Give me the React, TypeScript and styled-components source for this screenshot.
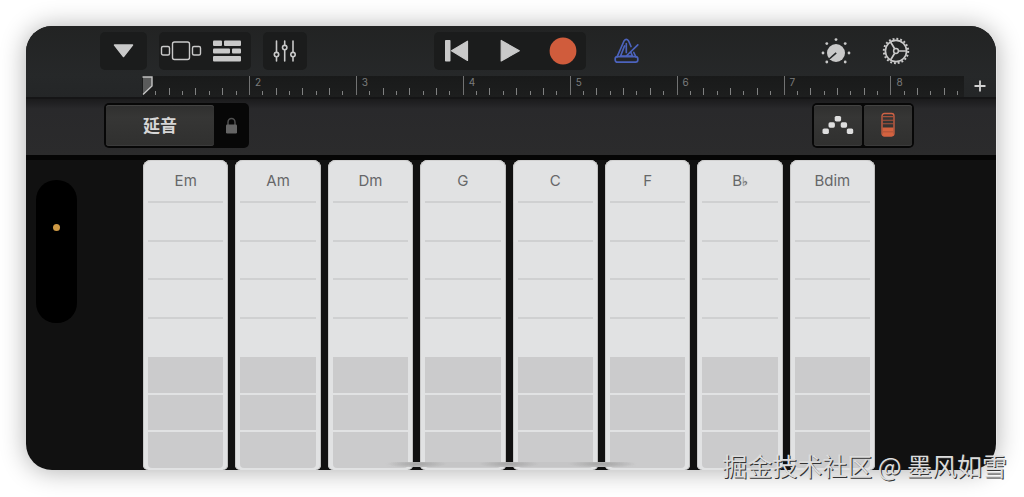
import React, { useState } from 'react';
import styled, { createGlobalStyle, css } from 'styled-components';

const GlobalStyle = createGlobalStyle`
  *, *::before, *::after { box-sizing: border-box; }
  html, body { margin: 0; padding: 0; background: #fff; }
  body { font-family: Inter, "Liberation Sans", "Noto Sans CJK SC", sans-serif; }
  button { margin: 0; padding: 0; border: 0; background: none; color: inherit; font: inherit; cursor: pointer; }
  svg { display: block; }
`;

const Page = styled.div`
  position: relative;
  display: flex;
  min-height: 100vh;
  padding: 26px 28px 27px 26px;
  overflow: hidden;
`;

const Device = styled.main`
  position: relative;
  display: flex;
  flex: 1;
  flex-direction: column;
  min-width: 0;
  overflow: hidden;
  border-radius: 26px;
  background: #111;
`;

const Shade = styled.div`
  display: flex;
  flex: 1;
  min-width: 0;
  border-radius: 26px;
  box-shadow: 1px 0 0 #e4e4e4, 0 1px 26px rgba(0, 0, 0, 0.32);
`;

const Header = styled.header`
  background: linear-gradient(#222323, #262829 70%, #242627);
`;

const Toolbar = styled.div`
  display: grid;
  grid-template-columns: 1fr auto 1fr;
  align-items: center;
  height: 50px;
  padding: 0 77px 0 74px;
`;

const ToolSide = styled.div<{ $end?: boolean }>`
  display: flex;
  gap: ${(p) => (p.$end ? 14 : 12)}px;
  padding-left: ${(p) => (p.$end ? 18 : 0)}px;
`;

const ToolGroup = styled.div`
  display: flex;
  border-radius: 5px;
  background: #1b1c1c;
`;

const ToolButton = styled.button<{ $width?: number; $push?: boolean }>`
  display: flex;
  align-items: center;
  justify-content: center;
  width: ${(p) => p.$width ?? 46}px;
  height: 38px;
  margin-right: ${(p) => (p.$push ? 'auto' : '0')};
`;

const RulerRow = styled.div`
  display: flex;
  height: 21px;
  padding-left: 116px;
`;

const Ruler = styled.div`
  position: relative;
  display: flex;
  flex: 1;
  background: linear-gradient(#191a1a, #1d1e1e);
`;

const Bar = styled.div<{ $units: number }>`
  position: relative;
  display: flex;
  flex: ${(p) => p.$units} 0 0;
`;

const BarNumber = styled.span`
  position: absolute;
  top: 0;
  left: 6px;
  color: #7b7c7c;
  font-size: 10px;
  line-height: 12px;
`;

const Tick = styled.i<{ $units: number; $kind: 'none' | 'major' | 'mid' | 'minor' }>`
  flex: ${(p) => p.$units} 0 0;
  height: ${(p) => ({ none: 0, major: 19, mid: 7, minor: 4 })[p.$kind]}px;
  margin-top: ${(p) => ({ none: 0, major: 0, mid: 12, minor: 15 })[p.$kind]}px;
  border-left: 1px solid ${(p) => (p.$kind === 'major' ? '#717272' : '#808181')};
  ${(p) => p.$kind === 'none' && css`border-color: transparent;`}
`;

const Playhead = styled.svg`
  position: absolute;
  top: 0;
  left: 0;
`;

const AddButton = styled.button`
  display: flex;
  align-items: center;
  justify-content: center;
  width: 32px;
  padding-bottom: 2px;
`;

const Controls = styled.div`
  display: flex;
  align-items: flex-start;
  justify-content: space-between;
  height: 63px;
  padding: 4px 82px 0 78px;
  border-top: 2px solid #151516;
  border-bottom: 5px solid #050505;
  background: linear-gradient(#1b1b1c, #29292b 10px, #2b2b2c);
`;

const Plate = styled.div`
  display: flex;
  gap: 2px;
  height: 45px;
  padding: 2px;
  border-radius: 5px;
  background: #070707;
`;

const PlateButton = styled.button<{ $width: number; $flat?: boolean }>`
  display: flex;
  align-items: center;
  justify-content: center;
  width: ${(p) => p.$width}px;
  border-radius: 3px;
  color: #d6d6d6;
  font-family: "Noto Sans CJK SC", sans-serif;
  font-size: 17px;
  font-weight: 700;
  line-height: 24px;
  ${(p) =>
    !p.$flat &&
    css`
      padding-bottom: 2px;
      background: linear-gradient(#2f2f2f, #363635 30%, #30302f);
      box-shadow: inset 0 1px 0 #434342, inset 0 -1px 0 #3b3b3b;
    `}
`;

const Stage = styled.div`
  display: flex;
  flex: 1;
  padding-right: 121px;
`;

const Side = styled.div`
  flex: 0 0 117px;
  padding: 20px 0 0 10px;
`;

const Island = styled.div`
  width: 41px;
  height: 143px;
  padding: 44px 0 0 17px;
  border-radius: 20px;
  background: #000;
`;

const MicDot = styled.i`
  display: block;
  width: 7px;
  height: 7px;
  border-radius: 50%;
  background: #cf9a45;
`;

const Strips = styled.div`
  display: flex;
  flex: 1;
  gap: 7px;
  min-width: 0;
`;

const Strip = styled.section`
  display: flex;
  flex: 1 1 0;
  flex-direction: column;
  min-width: 0;
  min-height: 310px;
  padding: 0 5px 2px;
  border-radius: 8px 8px 5px 5px;
  background: #e1e2e3;
  box-shadow: inset 1px 0 0 #c9c9c9, inset -1px 0 0 #c0c0c0, inset 0 1px 0 #d2d2d2;
`;

const Chord = styled.button`
  height: 43px;
  border-bottom: 2px solid #cfd0d1;
  color: #666769;
  font-size: 15px;
  line-height: 41px;
  text-align: center;
`;

const Flat = styled.span`
  font-family: "DejaVu Sans", sans-serif;
  font-size: 12px;
  text-shadow: 0 0 1px #666769;
`;

const LightZone = styled.div`
  display: grid;
  flex: 1;
  grid-auto-rows: 1fr;
`;

const LightCell = styled.button`
  border-bottom: 2px solid #cfd0d1;
  &:last-child { border-bottom: 0; }
`;

const BassZone = styled.div`
  display: grid;
  grid-auto-rows: 1fr;
  gap: 2px;
  height: 111px;
`;

const BassCell = styled.button`
  background: #cbcbcc;
  &:last-child { border-radius: 0 0 4px 4px; }
`;

const HomeBar = styled.div`
  position: absolute;
  bottom: 3px;
  left: 37%;
  width: 26%;
  height: 5px;
  border-radius: 3px;
  background:
    radial-gradient(ellipse 30px 4px at 32px 2px, #a4a4a4, transparent),
    radial-gradient(ellipse 30px 4px at 124px 2px, #a4a4a4, transparent),
    radial-gradient(ellipse 34px 4px at 217px 2px, #a4a4a4, transparent),
    linear-gradient(90deg, transparent, #c5c5c6 12%, #c5c5c6 88%, transparent);
`;

const Watermark = styled.p`
  position: absolute;
  right: 17px;
  bottom: 14px;
  margin: 0;
  color: #dcdcdc;
  font-family: "Noto Sans CJK SC", sans-serif;
  font-size: 25px;
  line-height: 36px;
  white-space: nowrap;
  text-shadow: 1px 1px 0 #333;
`;

const ink = '#c9c9c9';

const MenuIcon = () => (
  <svg width="22" height="16" viewBox="0 0 22 16">
    <path d="M1.5 2H19.5L10.5 13.5Z" fill={ink} stroke={ink} strokeWidth="1.5" strokeLinejoin="round" />
  </svg>
);

const BrowserIcon = () => (
  <svg width="42" height="22" viewBox="0 0 42 22" fill="none" stroke={ink} strokeWidth="1.4">
    <rect x="12.5" y="2" width="17" height="17.5" rx="2" />
    <rect x="1.5" y="6.5" width="8" height="8.5" rx="1.5" />
    <rect x="32.5" y="6.5" width="8" height="8.5" rx="1.5" />
  </svg>
);

const TracksIcon = () => (
  <svg width="28" height="22" viewBox="0 0 28 22" fill={ink}>
    <rect x="0" y="0.5" width="9" height="5.5" rx="1" />
    <rect x="11" y="0.5" width="17" height="5.5" rx="1" />
    <rect x="0" y="8.5" width="17" height="5" rx="1" />
    <rect x="19" y="8.5" width="9" height="5" rx="1" />
    <rect x="0" y="16" width="28" height="5.5" rx="1" />
  </svg>
);

const MixerIcon = () => (
  <svg width="24" height="24" viewBox="0 0 24 24" fill="none" stroke={ink} strokeWidth="1.6" strokeLinecap="round">
    <path d="M3.5 2V13.2M3.5 18V22M11.7 2V6.2M11.7 11V22M20 2V13.2M20 18V22" />
    <circle cx="3.5" cy="15.6" r="2.2" />
    <circle cx="11.7" cy="8.6" r="2.2" />
    <circle cx="20" cy="15.6" r="2.2" />
  </svg>
);

const RewindIcon = () => (
  <svg width="24" height="22" viewBox="0 0 24 22" fill={ink}>
    <rect x="0" y="0" width="5.5" height="21.5" rx="0.8" />
    <path d="M22.5 1.2V20.5L6.5 10.8Z" stroke={ink} strokeWidth="1.2" strokeLinejoin="round" />
  </svg>
);

const PlayIcon = () => (
  <svg width="20" height="24" viewBox="0 0 20 24">
    <path d="M1.2 1.5V22L19.3 11.8Z" fill={ink} stroke={ink} strokeWidth="1.2" strokeLinejoin="round" />
  </svg>
);

const RecordIcon = () => (
  <svg width="28" height="28" viewBox="0 0 28 28">
    <circle cx="14" cy="14" r="13.4" fill="#d05c3c" />
  </svg>
);

const MetronomeIcon = () => (
  <svg width="26" height="26" viewBox="0 0 26 26" fill="none" stroke="#4c63bd" strokeWidth="1.7" strokeLinecap="round" strokeLinejoin="round">
    <path d="M3 19L10 3Q12.3 -0.2 14.6 3L17 8.5M19.8 14.5L22 19" />
    <rect x="1.2" y="18.6" width="22.6" height="5.6" rx="2.2" />
    <path d="M6.5 18.2H18.5L17 14.5M6.5 18.2L10.5 8M12.3 5.5V14.5M12.3 18L23.8 6.8" />
  </svg>
);

const KnobIcon = () => (
  <svg width="30" height="28" viewBox="0 0 30 28" fill={ink}>
    <circle cx="15" cy="16" r="9" />
    <path d="M15.2 15.8L8.2 22" stroke="#252728" strokeWidth="1.6" />
    {[
      [15, 2.6], [5.8, 6.6], [24.2, 6.6], [2, 16], [28, 16], [5.8, 25], [24.2, 25],
    ].map(([x, y]) => (
      <circle key={`${x}-${y}`} cx={x} cy={y} r="1.4" />
    ))}
  </svg>
);

const GearIcon = () => (
  <svg width="28" height="28" viewBox="0 0 28 28" fill="none" stroke={ink}>
    <circle cx="14" cy="14" r="12.2" strokeWidth="2" strokeDasharray="1.9 1.933" />
    <circle cx="14" cy="14" r="10.6" strokeWidth="1.7" />
    <circle cx="14" cy="14" r="2.4" strokeWidth="1.5" />
    <path d="M16.6 14H24M12.7 11.8L8.7 5.2M12.7 16.2L8.7 22.8" strokeWidth="1.7" />
  </svg>
);

const PlusIcon = () => (
  <svg width="12" height="12" viewBox="0 0 12 12">
    <path d="M6 0.5V11.5M0.5 6H11.5" stroke="#d2d2d2" strokeWidth="1.8" />
  </svg>
);

const LockIcon = () => (
  <svg width="13" height="18" viewBox="0 0 13 18">
    <path d="M3 8V5.2A3.5 3.8 0 0 1 10 5.2V8" fill="none" stroke="#505050" strokeWidth="1.5" />
    <rect x="1" y="7.5" width="11" height="9" rx="1.2" fill="#646464" />
  </svg>
);

const ArpeggioIcon = () => (
  <svg width="32" height="20" viewBox="0 0 32 20" fill="#dedede">
    {[
      [0.5, 13.5], [6.5, 7.3], [12.7, 1], [18.7, 7.3], [24.8, 13.5],
    ].map(([x, y]) => (
      <rect key={x} x={x} y={y} width="6.4" height="5.4" rx="1.6" />
    ))}
  </svg>
);

const ChordStripIcon = () => (
  <svg width="14" height="26" viewBox="0 0 14 26" fill="none" stroke="#cf6245" strokeWidth="1.3">
    <rect x="1" y="1.5" width="12" height="22.5" rx="2.4" />
    <path d="M1 4.6H13M1 8.2H13M1 11.8H13" stroke="#a9523b" strokeWidth="1.1" />
    <path d="M1.5 15.5H12.5V22.5L11.5 24H2.5L1.5 22.5Z" fill="#d3623f" stroke="none" />
    <path d="M2 19.8H12" stroke="#a24f38" strokeWidth="0.8" />
  </svg>
);

const bars = [1, 2, 3, 4, 5, 6, 7, 8];
const wholeBar = [10, 10, 10, 10, 10, 10, 10, 10];
const partialBar = [10, 10, 10, 10, 10, 5];

const tickKind = (bar: number, index: number) => {
  if (index === 0) return bar === 1 ? 'none' : 'major';
  return index % 2 === 0 ? 'mid' : 'minor';
};

const chords = ['Em', 'Am', 'Dm', 'G', 'C', 'F', 'B♭', 'Bdim'];

const ChordStrip = ({ name }: { name: string }) => {
  const id = `chord-${name}`;
  return (
    <Strip>
      <Chord type="button" id={id}>
        {name.charAt(0)}
        {name.charAt(1) === '♭' ? <Flat>♭</Flat> : name.slice(1)}
      </Chord>
      <LightZone>
        {[0, 1, 2, 3].map((n) => (
          <LightCell key={n} type="button" aria-labelledby={id} />
        ))}
      </LightZone>
      <BassZone>
        {[0, 1, 2].map((n) => (
          <BassCell key={n} type="button" aria-labelledby={id} />
        ))}
      </BassZone>
    </Strip>
  );
};

export default function App() {
  const [sustain, setSustain] = useState(false);

  return (
    <>
      <GlobalStyle />
      <Page>
        <Shade>
          <Device>
            <Header>
              <Toolbar>
                <ToolSide>
                  <ToolGroup>
                    <ToolButton type="button" $width={47} aria-label="Menu"><MenuIcon /></ToolButton>
                  </ToolGroup>
                  <ToolGroup>
                    <ToolButton type="button" $width={44} aria-label="Browser"><BrowserIcon /></ToolButton>
                    <ToolButton type="button" $width={48} aria-label="Tracks"><TracksIcon /></ToolButton>
                  </ToolGroup>
                  <ToolGroup>
                    <ToolButton type="button" $width={44} aria-label="Mixer"><MixerIcon /></ToolButton>
                  </ToolGroup>
                </ToolSide>
                <ToolGroup>
                  <ToolButton type="button" aria-label="Rewind"><RewindIcon /></ToolButton>
                  <ToolButton type="button" $width={60} aria-label="Play"><PlayIcon /></ToolButton>
                  <ToolButton type="button" aria-label="Record"><RecordIcon /></ToolButton>
                </ToolGroup>
                <ToolSide $end>
                  <ToolButton type="button" $push aria-label="Metronome"><MetronomeIcon /></ToolButton>
                  <ToolButton type="button" aria-label="Effects"><KnobIcon /></ToolButton>
                  <ToolButton type="button" aria-label="Settings"><GearIcon /></ToolButton>
                </ToolSide>
              </Toolbar>
              <RulerRow>
                <Ruler>
                  {bars.map((bar) => {
                    const units = bar === 8 ? partialBar : wholeBar;
                    return (
                      <Bar key={bar} $units={units.reduce((a, b) => a + b, 0)}>
                        {units.map((u, i) => (
                          <Tick key={i} $units={u} $kind={tickKind(bar, i)} />
                        ))}
                        {bar > 1 && <BarNumber>{bar}</BarNumber>}
                      </Bar>
                    );
                  })}
                  <Playhead width="12" height="20" viewBox="0 0 12 20">
                    <path d="M1 1H10V10L1 18.5Z" fill="#5a5b5b" />
                    <path d="M0.5 1H10V10L1 18.5" fill="none" stroke="#c4c4c4" strokeWidth="1.4" />
                  </Playhead>
                </Ruler>
                <AddButton type="button" aria-label="Add section"><PlusIcon /></AddButton>
              </RulerRow>
            </Header>
            <Controls>
              <Plate>
                <PlateButton type="button" $width={108} aria-pressed={sustain} onClick={() => setSustain(!sustain)}>
                  延音
                </PlateButton>
                <PlateButton type="button" $width={31} $flat aria-label="Lock"><LockIcon /></PlateButton>
              </Plate>
              <Plate>
                <PlateButton type="button" $width={48} aria-label="Notes"><ArpeggioIcon /></PlateButton>
                <PlateButton type="button" $width={48} aria-label="Chord strips"><ChordStripIcon /></PlateButton>
              </Plate>
            </Controls>
            <Stage>
              <Side>
                <Island><MicDot /></Island>
              </Side>
              <Strips>
                {chords.map((name) => <ChordStrip key={name} name={name} />)}
              </Strips>
            </Stage>
            <HomeBar />
          </Device>
        </Shade>
        <Watermark>掘金技术社区 @ 墨风如雪</Watermark>
      </Page>
    </>
  );
}
